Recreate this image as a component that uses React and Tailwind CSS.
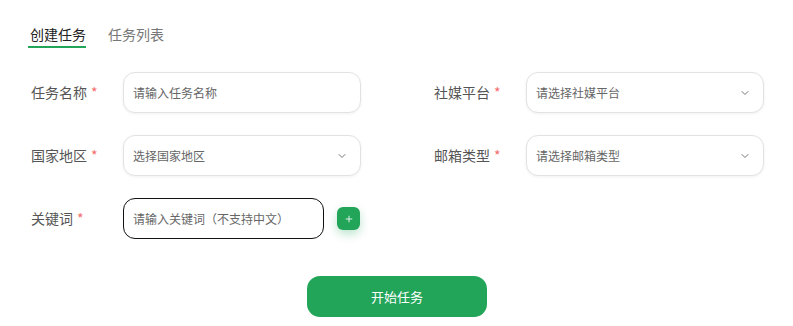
import { ChevronDown, Plus } from 'lucide-react';

const Label = ({ children }) => (
    <label className="w-[92px] shrink-0 text-[14px] text-[#555]">
        {children}
        <span className="ml-[4px] text-[#f56c6c]">*</span>
    </label>
);

const SelectBox = ({ placeholder }) => (
    <div className="flex h-[41px] w-[238px] items-center justify-between rounded-[12px] border border-[#e2e2e2] bg-white pl-[9px] pr-[12px] shadow-[0_1px_3px_rgba(0,0,0,0.06)]">
        <span className="text-[12px] text-[#666]">{placeholder}</span>
        <ChevronDown className="h-[12px] w-[12px] text-[#777]" strokeWidth={2} />
    </div>
);

const App = () => {
    return (
        <div className="h-[326px] w-[793px] bg-white pl-[28px] pt-[24px] font-['Noto_Sans_CJK_SC',sans-serif]">
            <div className="flex items-start gap-[20px]">
                <div className="flex flex-col">
                    <span className="px-[2px] text-[14px] leading-[20px] text-[#222]">创建任务</span>
                    <div className="mt-[2px] h-[2px] w-[58px] bg-[#22a559]"></div>
                </div>
                <span className="text-[14px] leading-[20px] text-[#777]">任务列表</span>
            </div>

            <div className="mt-[24px] flex flex-col gap-[22px] pl-[3px]">
                <div className="flex items-center">
                    <div className="flex w-[403px] items-center">
                        <Label>任务名称</Label>
                        <div className="flex h-[41px] w-[238px] items-center rounded-[12px] border border-[#e2e2e2] bg-white pl-[9px] shadow-[0_1px_3px_rgba(0,0,0,0.06)]">
                            <span className="text-[12px] text-[#666]">请输入任务名称</span>
                        </div>
                    </div>
                    <div className="flex items-center">
                        <Label>社媒平台</Label>
                        <SelectBox placeholder="请选择社媒平台" />
                    </div>
                </div>

                <div className="flex items-center">
                    <div className="flex w-[403px] items-center">
                        <Label>国家地区</Label>
                        <SelectBox placeholder="选择国家地区" />
                    </div>
                    <div className="flex items-center">
                        <Label>邮箱类型</Label>
                        <SelectBox placeholder="请选择邮箱类型" />
                    </div>
                </div>

                <div className="flex items-center">
                    <Label>关键词</Label>
                    <div className="flex h-[41px] w-[201px] items-center rounded-[12px] border border-[#111] bg-white pl-[9px]">
                        <span className="text-[12px] text-[#666]">请输入关键词（不支持中文）</span>
                    </div>
                    <button className="ml-[13px] flex h-[23px] w-[23px] items-center justify-center rounded-[6px] bg-[#22a559] shadow-[0_4px_10px_rgba(34,165,89,0.3)]">
                        <Plus className="h-[10px] w-[10px] text-white" strokeWidth={2} />
                    </button>
                </div>
            </div>

            <div className="mt-[37px] flex pl-[279px]">
                <button className="h-[41px] w-[180px] rounded-[13px] bg-[#22a559] text-[13px] text-white">
                    开始任务
                </button>
            </div>
        </div>
    );
};

export default App;
